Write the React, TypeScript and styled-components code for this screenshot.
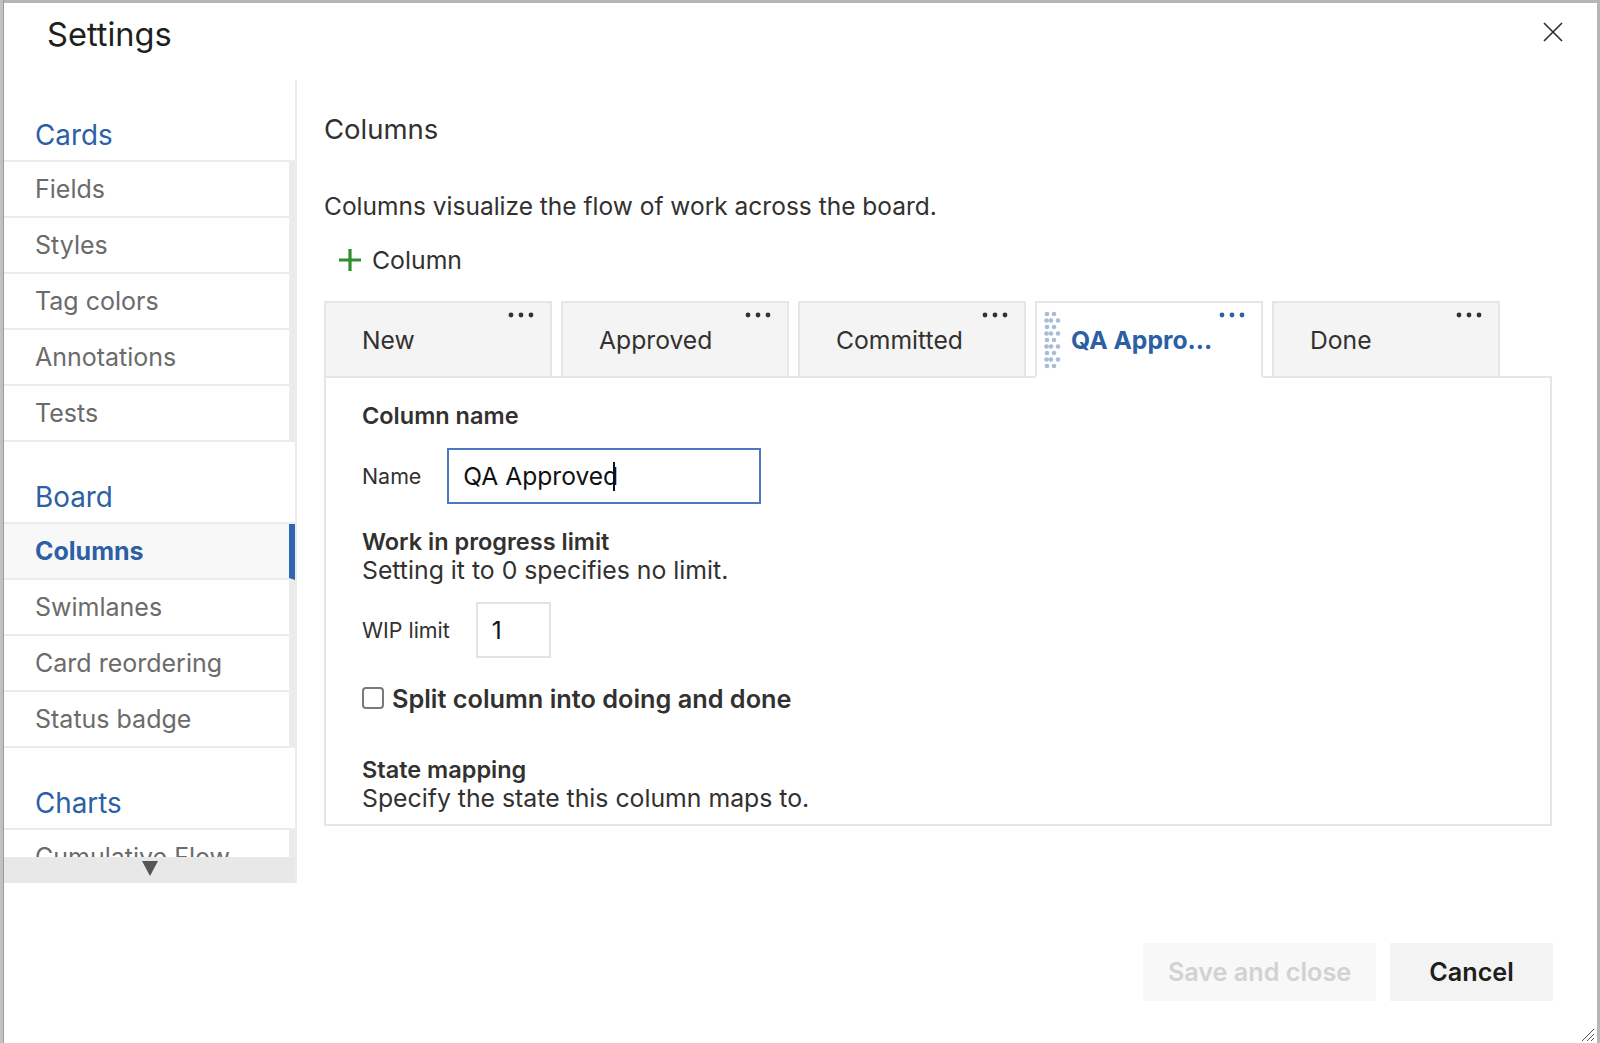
import React from "react";
import styled, { createGlobalStyle } from "styled-components";

const GlobalStyle = createGlobalStyle`
  html, body {
    margin: 0;
    padding: 0;
  }
  body {
    background: #b6b6b6;
    font-family: Inter, "Noto Sans", "Liberation Sans", sans-serif;
    color: #323130;
    overflow: hidden;
  }
  * {
    box-sizing: border-box;
  }
`;

const Backdrop = styled.div`
  width: 1600px;
  height: 1043px;
  padding: 3px 3px 0 4px;
  background: linear-gradient(to right, #c2c2c2 0 3px, #9a9a9a 3px 4px, transparent 4px);
`;

const Dialog = styled.div`
  position: relative;
  width: 100%;
  height: 100%;
  background: #fff;
  display: flex;
  flex-direction: column;
`;

const Header = styled.header`
  height: 77px;
  flex: none;
  padding: 0 34px 15px 43px;
  display: flex;
  align-items: center;
  justify-content: space-between;
`;

const Title = styled.h1`
  margin: 0;
  font-size: 32.6px;
  font-weight: 400;
  color: #201f1e;
`;

const CloseButton = styled.button`
  width: 20px;
  height: 20px;
  padding: 0;
  margin-bottom: 4px;
  border: 0;
  background: none;
  display: flex;
`;

const Body = styled.div`
  flex: 1;
  display: flex;
  min-height: 0;
`;

const Nav = styled.nav`
  width: 293px;
  height: 803px;
  flex: none;
  border-right: 2px solid #ececec;
  display: flex;
  flex-direction: column;
`;

const NavScroll = styled.div`
  flex: 1;
  overflow: hidden;
`;

const GroupHeader = styled.div`
  height: 82px;
  padding: 40px 0 0 31px;
  line-height: 30px;
  font-size: 27.8px;
  color: #2b5fa6;
  border-bottom: 2px solid #ececec;
`;

const NavItem = styled.div<{ $active?: boolean }>`
  height: 56px;
  padding-left: 31px;
  display: flex;
  align-items: center;
  font-size: 25px;
  color: ${(p) => (p.$active ? "#2b5fa6" : "#6b6b6b")};
  font-weight: ${(p) => (p.$active ? 700 : 400)};
  background: ${(p) => (p.$active ? "#f8f8f8" : "#fff")};
  border-bottom: 2px solid #ececec;
  border-right: 6px solid ${(p) => (p.$active ? "#2e66b1" : "#ebebeb")};
`;

const ScrollDown = styled.div`
  height: 26px;
  flex: none;
  background: #e8e8e8;
  display: flex;
  justify-content: center;
  padding-top: 3px;
`;

const Main = styled.main`
  flex: 1;
  min-width: 0;
  padding: 0 45px 0 27px;
  display: flex;
  flex-direction: column;
`;

const SectionTitle = styled.h2`
  margin: 32px 0 0;
  font-size: 27.5px;
  font-weight: 400;
  line-height: 34px;
  color: #323130;
`;

const Description = styled.p`
  margin: 44px 0 0;
  font-size: 24.5px;
  line-height: 32px;
  color: #323130;
`;

const AddButton = styled.button`
  align-self: flex-start;
  margin-top: 22px;
  height: 32px;
  padding: 0 0 0 14px;
  border: 0;
  background: none;
  display: flex;
  align-items: center;
  gap: 10px;
  font-family: inherit;
  font-size: 24.8px;
  color: #323130;
`;

const Tabs = styled.div`
  margin-top: 25px;
  display: flex;
  gap: 9px;
  position: relative;
  z-index: 1;
`;

const Tab = styled.div<{ $selected?: boolean }>`
  width: 228px;
  height: 77px;
  margin-bottom: -2px;
  padding: 0 16px 0 ${(p) => (p.$selected ? "7px" : "36px")};
  display: flex;
  align-items: center;
  background: ${(p) => (p.$selected ? "#fff" : "#f4f4f4")};
  border: 2px solid #e6e6e6;
  border-bottom-color: ${(p) => (p.$selected ? "#fff" : "#e6e6e6")};
`;

const TabLabel = styled.span<{ $selected?: boolean }>`
  flex: 1;
  font-size: 24.7px;
  white-space: nowrap;
  color: ${(p) => (p.$selected ? "#2b5fa6" : "#323130")};
  font-weight: ${(p) => (p.$selected ? 700 : 400)};
`;

const Gripper = styled.svg`
  flex: none;
  margin-right: 9px;
`;

const MoreDots = styled.svg`
  flex: none;
  align-self: flex-start;
  margin-top: 9px;
`;

const Panel = styled.section`
  border: 2px solid #e6e6e6;
  padding: 24px 36px 12px;
`;

const FieldHeading = styled.div<{ $top?: number }>`
  margin-top: ${(p) => p.$top ?? 0}px;
  font-size: 23.5px;
  font-weight: 600;
  line-height: 28px;
  color: #323130;
`;

const HelpText = styled.div`
  font-size: 24.8px;
  line-height: 28px;
  color: #323130;
`;

const FieldRow = styled.div`
  margin-top: 18px;
  display: flex;
  align-items: center;
  gap: 26px;
`;

const FieldLabel = styled.label`
  font-size: 21.4px;
  color: #323130;
`;

const InputWrap = styled.div`
  position: relative;
  display: flex;
`;

const TextInput = styled.input<{ $focused?: boolean; $width: number }>`
  width: ${(p) => p.$width}px;
  height: 56px;
  padding: 0 14px;
  border: 2px solid ${(p) => (p.$focused ? "#4a78c2" : "#e3e3e3")};
  border-radius: 0;
  outline: none;
  font-family: inherit;
  font-size: 24.6px;
  color: #111;
  background: #fff;
  caret-color: #111;
`;

const Caret = styled.span`
  position: absolute;
  left: 166px;
  top: 14px;
  width: 2px;
  height: 29px;
  background: #111;
`;

const CheckRow = styled.label`
  margin-top: 25px;
  height: 30px;
  display: flex;
  align-items: center;
  gap: 8px;
  font-size: 25.3px;
  font-weight: 600;
  color: #323130;
`;

const Checkbox = styled.input`
  appearance: none;
  margin: 0;
  width: 22px;
  height: 22px;
  border: 2px solid #7a7a7a;
  border-radius: 4px;
  background: #fff;
`;

const Footer = styled.footer`
  height: 100px;
  flex: none;
  padding: 0 44px 42px 0;
  display: flex;
  justify-content: flex-end;
  align-items: flex-end;
  gap: 14px;
`;

const FooterButton = styled.button<{ $primary?: boolean; $width: number }>`
  width: ${(p) => p.$width}px;
  height: 58px;
  border: 0;
  font-family: inherit;
  font-size: 25.2px;
  font-weight: 600;
  background: ${(p) => (p.$primary ? "#f8f8f8" : "#f3f3f3")};
  color: ${(p) => (p.$primary ? "#d2d2d2" : "#1e1e1e")};
`;

const ResizeGrip = styled.svg`
  position: absolute;
  right: 2px;
  bottom: 1px;
`;

const navGroups = [
  { title: "Cards", items: ["Fields", "Styles", "Tag colors", "Annotations", "Tests"] },
  { title: "Board", items: ["Columns", "Swimlanes", "Card reordering", "Status badge"] },
  { title: "Charts", items: ["Cumulative Flow"] },
];

const columns = ["New", "Approved", "Committed", "QA Appro...", "Done"];
const selectedColumn = 3;

function Dots({ color }: { color: string }) {
  return (
    <MoreDots width="26" height="6" viewBox="0 0 26 6">
      <circle cx="3" cy="3" r="2.4" fill={color} />
      <circle cx="13" cy="3" r="2.4" fill={color} />
      <circle cx="23" cy="3" r="2.4" fill={color} />
    </MoreDots>
  );
}

function GripDots() {
  const dots: React.ReactNode[] = [];
  for (let k = 0; k < 9; k++) {
    const y = 3 + k * 6.5;
    const xs = k % 2 === 0 ? [3, 10] : [2.5, 7, 14];
    xs.forEach((x) => dots.push(<circle key={`${k}-${x}`} cx={x} cy={y} r="2.3" fill="#a9bdd6" />));
  }
  return (
    <Gripper width="18" height="58" viewBox="0 0 18 58">
      {dots}
    </Gripper>
  );
}

function App() {
  const [name, setName] = React.useState("QA Approved");
  const [wip, setWip] = React.useState("1");

  return (
    <>
      <GlobalStyle />
      <Backdrop>
        <Dialog>
          <Header>
            <Title>Settings</Title>
            <CloseButton aria-label="Close">
              <svg width="20" height="20" viewBox="0 0 20 20">
                <path d="M1 1 L19 19 M19 1 L1 19" stroke="#2b2b2b" strokeWidth="1.6" fill="none" />
              </svg>
            </CloseButton>
          </Header>
          <Body>
            <Nav>
              <NavScroll>
                {navGroups.map((g) => (
                  <div key={g.title}>
                    <GroupHeader>{g.title}</GroupHeader>
                    {g.items.map((it) => (
                      <NavItem key={it} $active={it === "Columns"}>
                        {it}
                      </NavItem>
                    ))}
                  </div>
                ))}
              </NavScroll>
              <ScrollDown>
                <svg width="16" height="16" viewBox="0 0 16 16">
                  <path d="M0 1 H16 L8 16 Z" fill="#555" />
                </svg>
              </ScrollDown>
            </Nav>
            <Main>
              <SectionTitle>Columns</SectionTitle>
              <Description>Columns visualize the flow of work across the board.</Description>
              <AddButton>
                <svg width="24" height="24" viewBox="0 0 24 24">
                  <path d="M12 1 V23 M1 12 H23" stroke="#2f8f2f" strokeWidth="3.2" fill="none" />
                </svg>
                Column
              </AddButton>
              <Tabs>
                {columns.map((c, i) => {
                  const sel = i === selectedColumn;
                  return (
                    <Tab key={c} $selected={sel}>
                      {sel && <GripDots />}
                      <TabLabel $selected={sel}>{c}</TabLabel>
                      <Dots color={sel ? "#2b5fa6" : "#333"} />
                    </Tab>
                  );
                })}
              </Tabs>
              <Panel>
                <FieldHeading>Column name</FieldHeading>
                <FieldRow>
                  <FieldLabel>Name</FieldLabel>
                  <InputWrap>
                    <TextInput
                      $focused
                      $width={314}
                      value={name}
                      onChange={(e) => setName(e.target.value)}
                    />
                    <Caret />
                  </InputWrap>
                </FieldRow>
                <FieldHeading $top={24}>Work in progress limit</FieldHeading>
                <HelpText>Setting it to 0 specifies no limit.</HelpText>
                <FieldRow>
                  <FieldLabel>WIP limit</FieldLabel>
                  <TextInput $width={75} value={wip} onChange={(e) => setWip(e.target.value)} />
                </FieldRow>
                <CheckRow>
                  <Checkbox type="checkbox" />
                  Split column into doing and done
                </CheckRow>
                <FieldHeading $top={43}>State mapping</FieldHeading>
                <HelpText>Specify the state this column maps to.</HelpText>
              </Panel>
            </Main>
          </Body>
          <Footer>
            <FooterButton $primary $width={233} disabled>
              Save and close
            </FooterButton>
            <FooterButton $width={163}>Cancel</FooterButton>
          </Footer>
          <ResizeGrip width="18" height="18" viewBox="0 0 18 18">
            <path d="M17 5 L5 17 M17 10 L10 17 M17 14 L14 17" stroke="#555" strokeWidth="1" />
          </ResizeGrip>
        </Dialog>
      </Backdrop>
    </>
  );
}

export default App;
